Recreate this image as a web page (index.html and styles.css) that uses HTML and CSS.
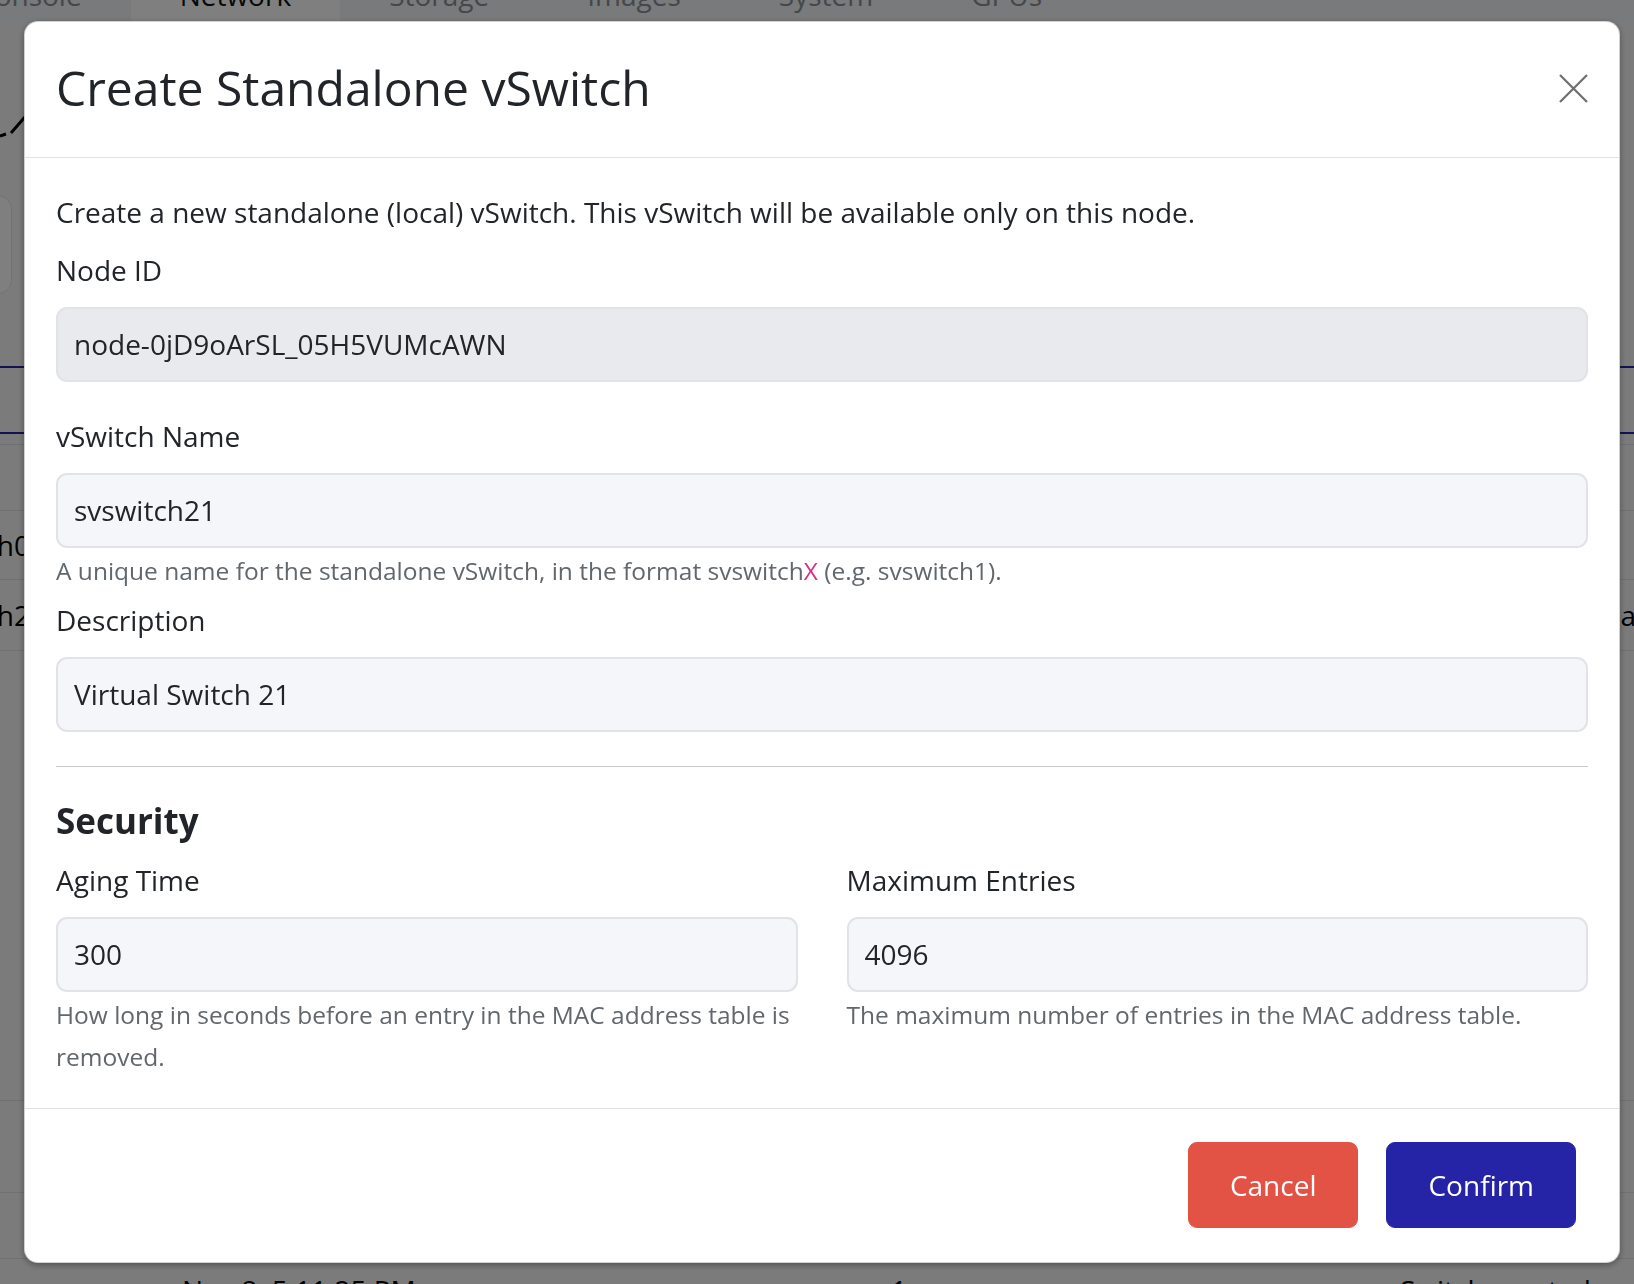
FILE: index.html
```html
<!DOCTYPE html>
<html lang="en">
<head>
    <meta charset="UTF-8">
    <meta name="viewport" content="width=device-width, initial-scale=1.0">
    <title>Create Standalone vSwitch</title>
    <link rel="stylesheet" href="styles.css">
</head>
<body>
    <!-- Page behind the dialog -->
    <div class="page">
        <nav class="tabs">
            <a class="tab">Console</a>
            <a class="tab active">Network</a>
            <a class="tab">Storage</a>
            <a class="tab">Images</a>
            <a class="tab">System</a>
            <a class="tab">GPUs</a>
        </nav>

        <div class="chart">
            <svg viewBox="0 0 60 174" width="60" height="174">
                <path d="M0 115 L6 113 M11 112 L24 97 L40 80" fill="none" stroke="#000" stroke-width="3"/>
            </svg>
        </div>

        <div class="stat-card"></div>

        <div class="subnav"></div>

        <div class="vs-table">
            <div class="vs-row"></div>
            <div class="vs-row"><span class="name">svswitch0</span></div>
            <div class="vs-row"><span class="name">svswitch2</span><span class="action">Manage</span></div>
        </div>

        <div class="events">
            <div class="ev-row"></div>
            <div class="ev-row"></div>
            <div class="ev-row">
                <span class="ev-time">Nov 8, 5:11:25 PM</span>
                <span class="ev-count">1</span>
                <span class="ev-msg">vSwitch created</span>
            </div>
        </div>
    </div>

    <div class="backdrop"></div>

    <!-- Dialog -->
    <div class="modal">
        <div class="modal-header">
            <h5 class="modal-title">Create Standalone vSwitch</h5>
            <button class="btn-close" type="button" aria-label="Close">
                <svg viewBox="0 0 29 29" width="29" height="29">
                    <path d="M1 1 L28 28 M28 1 L1 28" stroke="#6f6f6f" stroke-width="2.2" fill="none"/>
                </svg>
            </button>
        </div>

        <div class="modal-body">
            <p class="intro">Create a new standalone (local) vSwitch. This vSwitch will be available only on this node.</p>

            <div class="field field-node">
                <label class="form-label">Node ID</label>
                <div class="form-control disabled">node-0jD9oArSL_05H5VUMcAWN</div>
            </div>

            <div class="field">
                <label class="form-label">vSwitch Name</label>
                <div class="form-control">svswitch21</div>
                <div class="form-text">A unique name for the standalone vSwitch, in the format svswitch<span class="code">X</span> (e.g. svswitch1).</div>
            </div>

            <div class="field">
                <label class="form-label">Description</label>
                <div class="form-control">Virtual Switch 21</div>
            </div>

            <hr class="divider">

            <h5 class="section-title">Security</h5>

            <div class="row-2">
                <div class="field">
                    <label class="form-label">Aging Time</label>
                    <div class="form-control">300</div>
                    <div class="form-text">How long in seconds before an entry in the MAC address table is removed.</div>
                </div>
                <div class="field">
                    <label class="form-label">Maximum Entries</label>
                    <div class="form-control">4096</div>
                    <div class="form-text">The maximum number of entries in the MAC address table.</div>
                </div>
            </div>
        </div>

        <div class="modal-footer">
            <button class="btn btn-danger" type="button">Cancel</button>
            <button class="btn btn-primary" type="button">Confirm</button>
        </div>
    </div>
</body>
</html>
```

FILE: styles.css
```css
* {
    margin: 0;
    padding: 0;
    box-sizing: border-box;
}

body {
    font-family: 'Open Sans', 'Liberation Sans', sans-serif;
    font-size: 28px;
    line-height: 42px;
    color: #212529;
    background: #f7f7f8;
    overflow: hidden;
    width: 1634px;
    height: 1284px;
}

/* ---------- page behind ---------- */

.page {
    width: 1634px;
}

.tabs {
    display: flex;
    margin-top: -29px;
    margin-left: -72px;
    height: 50px;
    background: #f3f4f6;
}

.tab {
    padding: 3px 49px 5px;
    color: #8a8f94;
    white-space: nowrap;
}

.tab.active {
    background: #fff;
    color: #111;
}

.chart {
    height: 174px;
}

.chart svg {
    display: block;
}

.stat-card {
    width: 212px;
    height: 99px;
    margin-left: -200px;
    background: #fff;
    border: 1px solid #e4e5e8;
    border-radius: 14px;
}

.subnav {
    margin-top: 72px;
    height: 68px;
    border-top: 2px solid #2624a6;
    border-bottom: 2px solid #2624a6;
}

.vs-table {
    margin-top: 10px;
    border-bottom: 1px solid #dee2e6;
}

.vs-row {
    display: flex;
    align-items: center;
    height: 69px;
    border-top: 1px solid #dee2e6;
    color: #000;
}

.vs-row:first-child {
    height: 66px;
}

.vs-row:last-child {
    height: 71px;
}

.vs-row .name {
    margin-left: -96px;
}

.vs-row .action {
    margin-left: auto;
    margin-right: -33px;
}

.events {
    margin-top: 449px;
}

.ev-row {
    display: flex;
    height: 92px;
    border-top: 1px solid #dee2e6;
}

.ev-row:nth-child(2) {
    height: 66px;
}

.ev-row:last-child {
    padding-top: 10px;
    color: #000;
}

.ev-time {
    margin-left: 182px;
    width: 709px;
}

.ev-count {
    width: 495px;
}

.backdrop {
    position: fixed;
    inset: 0;
    background: rgba(0, 0, 0, 0.5);
}

/* ---------- dialog ---------- */

.modal {
    position: fixed;
    top: 21px;
    left: 24px;
    width: 1596px;
    background: #fff;
    border: 1px solid rgba(0, 0, 0, 0.175);
    border-radius: 14px;
    box-shadow: 0 2px 6px rgba(0, 0, 0, 0.35);
}

.modal-header {
    display: flex;
    align-items: center;
    justify-content: space-between;
    padding: 29px 31px 32px;
    border-bottom: 1px solid #dee2e6;
}

.modal-title {
    font-size: 48px;
    line-height: 74px;
    font-weight: 400;
}

.btn-close {
    display: flex;
    background: none;
    border: 0;
    cursor: pointer;
}

.modal-body {
    padding: 33px 31px 30px;
}

.intro {
    margin-bottom: 16px;
}

.form-label {
    display: block;
    margin-bottom: 16px;
}

.form-control {
    height: 75px;
    padding: 14px 16px;
    line-height: 43px;
    background: #f5f6fa;
    border: 2px solid #e1e3e7;
    border-radius: 11px;
    color: #212529;
}

.form-control.disabled {
    background: #e9eaee;
}

.field-node {
    margin-bottom: 33px;
}

.form-text {
    margin-top: 2px;
    margin-bottom: 7px;
    font-size: 24.5px;
    line-height: 42px;
    color: #62676c;
}

.form-text .code {
    color: #d63384;
}

.divider {
    margin-top: 34px;
    border: 0;
    border-top: 1px solid #c8c9ca;
}

.section-title {
    margin-top: 33px;
    margin-bottom: 17px;
    font-size: 35px;
    line-height: 42px;
    font-weight: 700;
}

.row-2 {
    display: grid;
    grid-template-columns: 1fr 1fr;
    column-gap: 49px;
}

.row-2 .form-label {
    margin-bottom: 16px;
}

.row-2 .form-text {
    margin-bottom: 0;
}

.modal-footer {
    display: flex;
    justify-content: flex-end;
    gap: 28px;
    padding: 33px 43px 34px;
    border-top: 1px solid #dee2e6;
}

.btn {
    font-family: inherit;
    font-size: 28px;
    line-height: 42px;
    padding: 21px 41px;
    border: 1px solid transparent;
    border-radius: 9px;
    color: #fff;
    cursor: pointer;
}

.btn-danger {
    background: #e25245;
    border-color: #e25245;
}

.btn-primary {
    background: #2624a6;
    border-color: #2624a6;
}
```
